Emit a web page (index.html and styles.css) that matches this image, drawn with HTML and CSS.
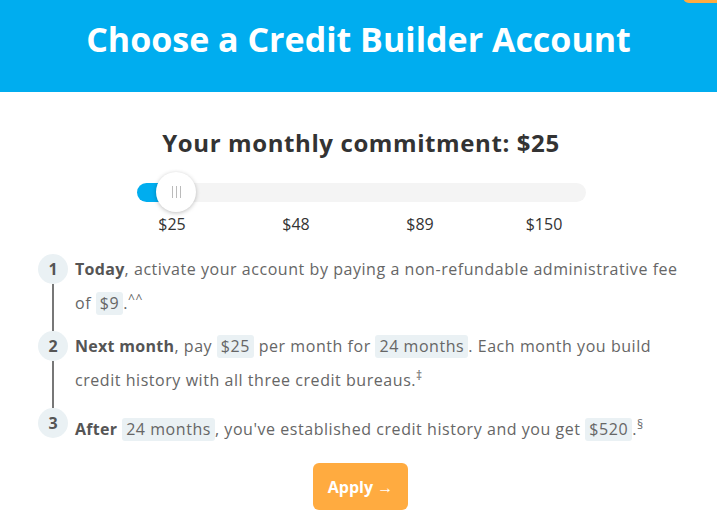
FILE: index.html
```html
<!DOCTYPE html>
<html lang="en">
<head>
    <meta charset="UTF-8">
    <meta name="viewport" content="width=device-width, initial-scale=1.0">
    <title>Choose a Credit Builder Account</title>
    <link rel="stylesheet" href="styles.css">
</head>
<body>
    <header class="banner">
        <h1>Choose a Credit Builder Account</h1>
        <span class="corner-tab"></span>
    </header>
    <main class="content">
        <h2 class="commitment">Your monthly commitment: $25</h2>
        <div class="slider">
            <div class="track">
                <div class="fill" style="width: 30px"></div>
                <div class="thumb"><span></span><span></span><span></span></div>
            </div>
            <div class="ticks">
                <span>$25</span>
                <span>$48</span>
                <span>$89</span>
                <span>$150</span>
            </div>
        </div>
        <ol class="steps">
            <li class="step">
                <span class="num">1</span>
                <p><b>Today</b>, activate your account by paying a non-refundable administrative fee of <span class="chip">$9</span>.<sup>^^</sup></p>
            </li>
            <li class="step">
                <span class="num">2</span>
                <p><b>Next month</b>, pay <span class="chip">$25</span> per month for <span class="chip">24 months</span>. Each month you build credit history with all three credit bureaus.<sup>‡</sup></p>
            </li>
            <li class="step last">
                <span class="num">3</span>
                <p><b>After</b> <span class="chip">24 months</span>, you've established credit history and you get <span class="chip">$520</span>.<sup>§</sup></p>
            </li>
        </ol>
        <div class="actions">
            <button class="apply">Apply →</button>
        </div>
    </main>
</body>
</html>
```

FILE: styles.css
```css
body { font-family: 'Open Sans', 'Liberation Sans', sans-serif; margin: 0; padding: 0; background: #ffffff; color: #333; }
.banner { background: #00adef; height: 92px; display: flex; align-items: center; justify-content: center; position: relative; }
.banner h1 { margin: 0 0 14px; color: #fff; font-size: 34px; font-weight: 700; }
.corner-tab { position: absolute; top: -6px; right: 0; width: 34px; height: 9px; background: #ffab40; border-radius: 0 0 0 6px; }
.content { padding: 0 29px 0 38px; }
.commitment { margin: 34px 0 0; text-align: center; font-size: 24px; letter-spacing: 0.6px; font-weight: 700; color: #333; padding-right: 4px; }
.slider { width: 449px; margin: 24px 0 0 99px; }
.track { position: relative; height: 19px; background: #f4f4f4; border-radius: 10px; }
.fill { height: 100%; background: #00adef; border-radius: 10px 0 0 10px; }
.thumb { position: absolute; left: 19px; top: -11px; width: 40px; height: 40px; border-radius: 50%; background: #fff; box-shadow: 0 1px 4px rgba(0, 0, 0, 0.25); display: flex; align-items: center; justify-content: center; gap: 3px; }
.thumb span { width: 1px; height: 12px; background: #bbb; }
.ticks { display: flex; margin: 11px 0 0 -27px; }
.ticks span { flex: none; width: 124px; text-align: center; font-size: 16px; color: #333; }
.steps { list-style: none; margin: 17px 0 0; padding: 0; }
.step { display: flex; gap: 7px; position: relative; padding-bottom: 9px; }
.step::before { content: ''; position: absolute; left: 14px; top: 32px; bottom: -2px; width: 2px; background: #777; }
.step.last::before { display: none; }
.num { flex: none; margin-top: 2px; width: 30px; height: 30px; border-radius: 50%; background: #eaf1f4; color: #555; font-weight: 700; font-size: 16px; display: flex; align-items: center; justify-content: center; position: relative; z-index: 1; }
.step p { margin: 0; font-size: 16px; letter-spacing: 0.55px; line-height: 34px; color: #666; }
.step p b { color: #555; letter-spacing: 0.3px; }
.step.last p { padding-top: 6px; }
.chip { display: inline-block; background: #eaf1f4; padding: 0 4px; line-height: 23px; border-radius: 3px; }
sup { font-size: 12px; line-height: 0; }
.actions { display: flex; justify-content: center; margin-top: 8px; padding-right: 5px; }
.apply { width: 95px; height: 47px; border: none; border-radius: 6px; background: #ffab40; color: #fff; font-family: inherit; font-size: 16px; font-weight: 700; cursor: pointer; }
```
